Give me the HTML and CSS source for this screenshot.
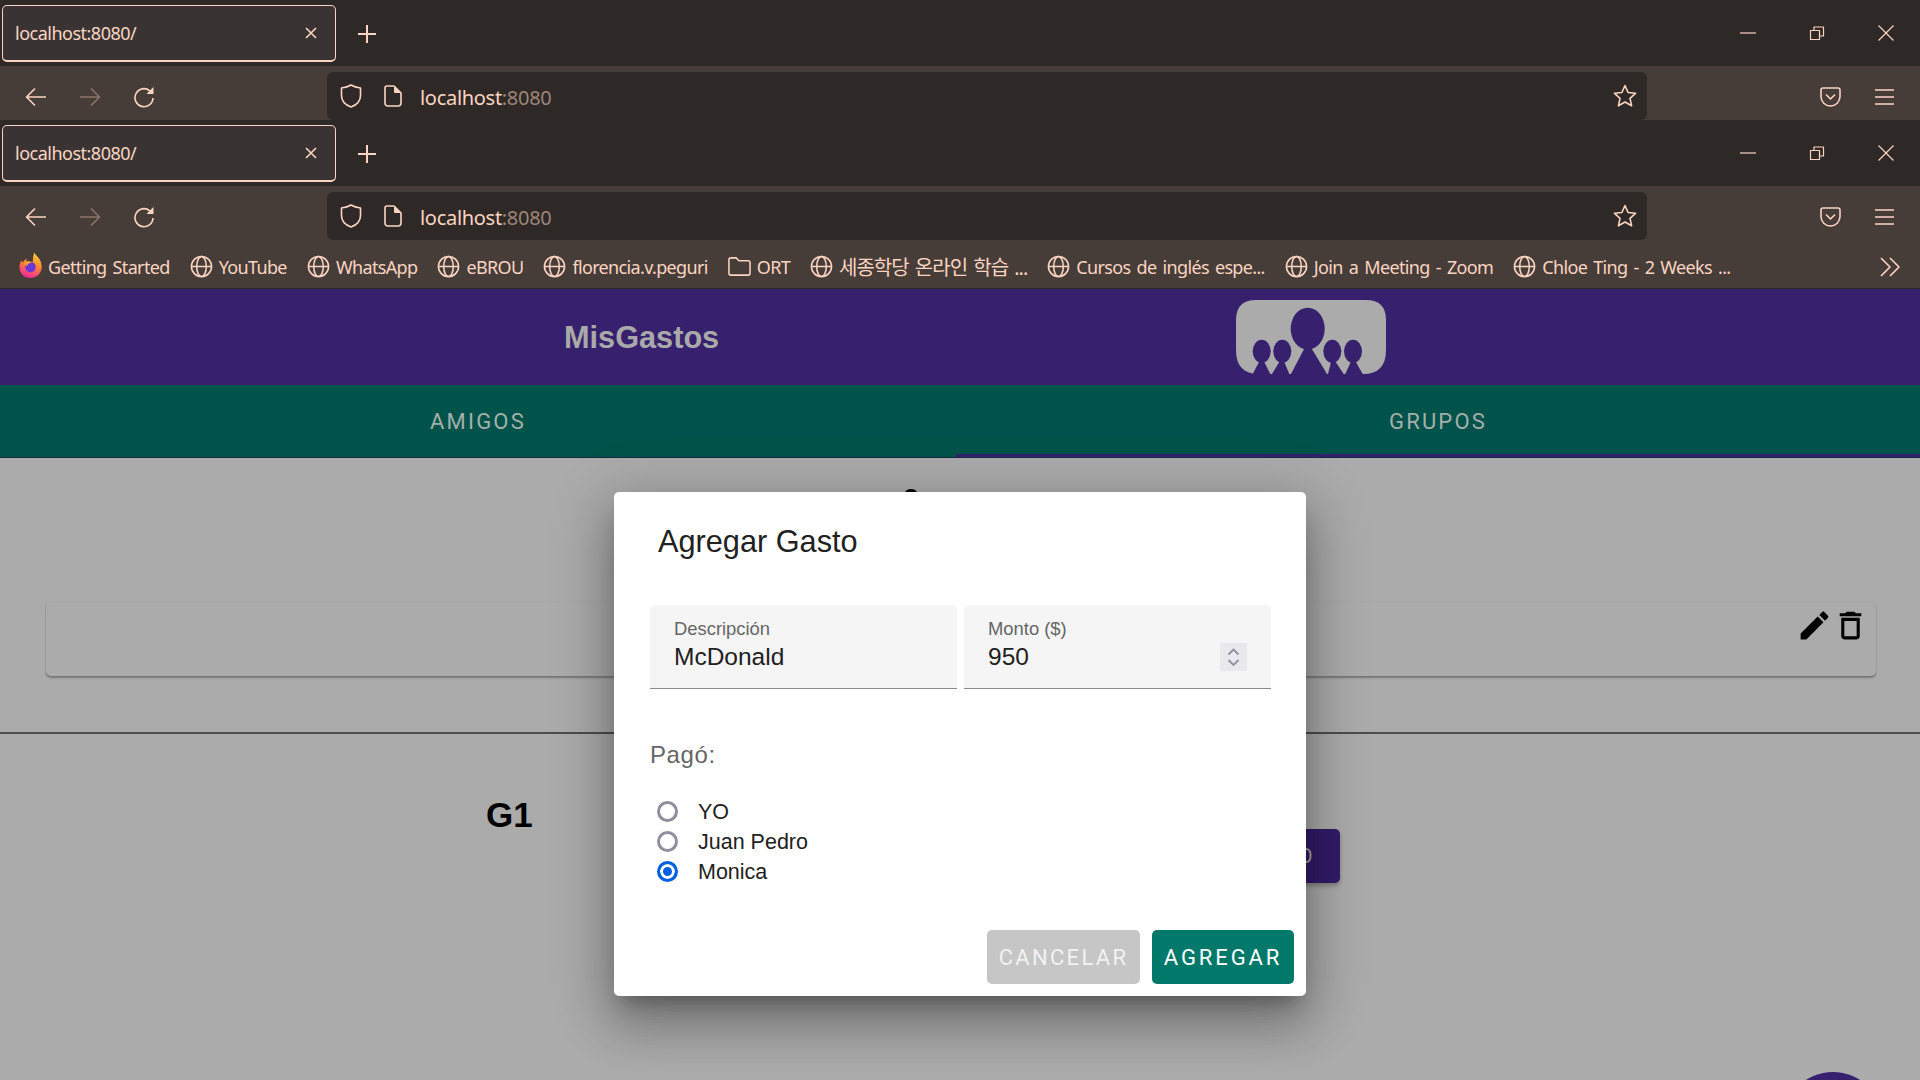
FILE: index.html
```html
<!DOCTYPE html>
<html lang="es">
<head>
    <meta charset="UTF-8">
    <title>MisGastos</title>
    <link rel="stylesheet" href="styles.css">
</head>
<body>

    <!-- shared icons -->
    <svg class="sprite" xmlns="http://www.w3.org/2000/svg">
        <symbol id="i-back" viewBox="0 0 22 22"><path d="M21 11H2M10 2.500L1.500 11l8.500 8.500"/></symbol>
        <symbol id="i-forward" viewBox="0 0 22 22"><path d="M1 11h19M12 2.500l8.500 8.500-8.500 8.500"/></symbol>
        <symbol id="i-reload" viewBox="0 0 22 22"><path d="M20 12a9 9 0 1 1-3.200-7.200"/><path class="solid" d="M20.500 1v7h-7z"/></symbol>
        <symbol id="i-shield" viewBox="0 0 22 24"><path d="M11 1C8.500 2.600 5 3.600 1.500 4v7.500C1.500 17 5.500 21 11 23c5.500-2 9.500-6 9.500-11.500V4C17 3.600 13.500 2.600 11 1z"/></symbol>
        <symbol id="i-page" viewBox="0 0 18 22"><path d="M3 1h7l7 7v10a3 3 0 0 1-3 3H4a3 3 0 0 1-3-3V3a2 2 0 0 1 2-2z"/><path class="solid" d="M10 1l7 7h-6a1 1 0 0 1-1-1z"/></symbol>
        <symbol id="i-star" viewBox="0 0 24 24"><path d="M12 1.500l3.100 7 7.400.8-5.500 5 1.600 7.500L12 18l-6.600 3.800L7 14.300l-5.500-5 7.400-.8z"/></symbol>
        <symbol id="i-pocket" viewBox="0 0 21 20"><path d="M3 1h15a2 2 0 0 1 2 2v6.500a9.500 9.500 0 0 1-19 0V3a2 2 0 0 1 2-2z"/><path d="M6 7.500l4.500 4.500L15 7.500"/></symbol>
        <symbol id="i-menu" viewBox="0 0 19 16"><path d="M0 1h19M0 8h19M0 15h19"/></symbol>
        <symbol id="i-globe" viewBox="0 0 24 24"><circle cx="12" cy="12" r="10.500"/><ellipse cx="12" cy="12" rx="5" ry="10.500"/><path d="M1.500 12h21"/></symbol>
        <symbol id="i-folder" viewBox="0 0 24 22"><path d="M1 4a2 2 0 0 1 2-2h5.500l3 3H21a2 2 0 0 1 2 2v11a2 2 0 0 1-2 2H3a2 2 0 0 1-2-2z"/></symbol>
        <symbol id="i-tabclose" viewBox="0 0 12 12"><path d="M1 1l10 10M11 1L1 11"/></symbol>
        <symbol id="i-plus" viewBox="0 0 18 18"><path d="M9 0v18M0 9h18"/></symbol>
        <symbol id="i-min" viewBox="0 0 16 16"><path d="M0 8h16"/></symbol>
        <symbol id="i-restore" viewBox="0 0 16 16"><path d="M1.500 5.500h9v9h-9zM5 5.500V2h9.500v9H10.500"/></symbol>
        <symbol id="i-close" viewBox="0 0 16 16"><path d="M.5.500l15 15M15.500.500l-15 15"/></symbol>
    </svg>

    <!-- first browser window, only its top bars are visible -->
    <div class="tabbar">
        <div class="tab">
            <span class="tab-title">localhost:8080/</span>
            <svg class="icon tab-x"><use href="#i-tabclose"/></svg>
        </div>
        <svg class="icon new-tab"><use href="#i-plus"/></svg>
        <div class="winctl">
            <svg class="icon"><use href="#i-min"/></svg>
            <svg class="icon restore"><use href="#i-restore"/></svg>
            <svg class="icon"><use href="#i-close"/></svg>
        </div>
    </div>
    <div class="toolbar">
        <div class="nav">
            <svg class="icon"><use href="#i-back"/></svg>
            <svg class="icon dim"><use href="#i-forward"/></svg>
            <svg class="icon"><use href="#i-reload"/></svg>
        </div>
        <div class="urlbar">
            <svg class="icon shield"><use href="#i-shield"/></svg>
            <svg class="icon page"><use href="#i-page"/></svg>
            <span class="url">localhost<span class="url-port">:8080</span></span>
            <svg class="icon star"><use href="#i-star"/></svg>
        </div>
        <svg class="icon pocket"><use href="#i-pocket"/></svg>
        <svg class="icon menu"><use href="#i-menu"/></svg>
    </div>

    <!-- second browser window -->
    <div class="tabbar">
        <div class="tab">
            <span class="tab-title">localhost:8080/</span>
            <svg class="icon tab-x"><use href="#i-tabclose"/></svg>
        </div>
        <svg class="icon new-tab"><use href="#i-plus"/></svg>
        <div class="winctl">
            <svg class="icon"><use href="#i-min"/></svg>
            <svg class="icon restore"><use href="#i-restore"/></svg>
            <svg class="icon"><use href="#i-close"/></svg>
        </div>
    </div>
    <div class="toolbar">
        <div class="nav">
            <svg class="icon"><use href="#i-back"/></svg>
            <svg class="icon dim"><use href="#i-forward"/></svg>
            <svg class="icon"><use href="#i-reload"/></svg>
        </div>
        <div class="urlbar">
            <svg class="icon shield"><use href="#i-shield"/></svg>
            <svg class="icon page"><use href="#i-page"/></svg>
            <span class="url">localhost<span class="url-port">:8080</span></span>
            <svg class="icon star"><use href="#i-star"/></svg>
        </div>
        <svg class="icon pocket"><use href="#i-pocket"/></svg>
        <svg class="icon menu"><use href="#i-menu"/></svg>
    </div>

    <div class="bookmarks">
        <a class="bm">
            <svg class="bm-fox" viewBox="0 0 24 28">
                <defs>
                    <linearGradient id="foxGrad" x1="0.7" y1="0" x2="0.4" y2="1">
                        <stop offset="0" stop-color="#ffd23c"/>
                        <stop offset="0.45" stop-color="#ff8a2b"/>
                        <stop offset="1" stop-color="#f0269b"/>
                    </linearGradient>
                </defs>
                <path fill="url(#foxGrad)" d="M16 1c1 3 5 5 6.500 9 1 3 1.500 5.500 1 8-1 6-6 9.500-11.500 9.500C5 27.500.5 22.500.5 16c0-3 1-5.500 2.500-7 0 1 .5 2 1 2.500C5 9 7.500 7 9 7.500c-1.500 1-2 2-1.500 2.500 2.500-.5 5 0 6.500 1.500C15 8 14.500 4 16 1z"/>
                <circle cx="12" cy="16" r="5.500" fill="#6a37d4"/>
                <path fill="#ff9a2e" d="M5 12c3-2.500 7-2 9 0-3-.5-5 .5-5.500 3-1.500-.5-3-1.500-3.500-3z"/>
            </svg>
            Getting Started
        </a>
        <a class="bm"><svg class="icon bm-icon"><use href="#i-globe"/></svg>YouTube</a>
        <a class="bm"><svg class="icon bm-icon"><use href="#i-globe"/></svg>WhatsApp</a>
        <a class="bm"><svg class="icon bm-icon"><use href="#i-globe"/></svg>eBROU</a>
        <a class="bm"><svg class="icon bm-icon"><use href="#i-globe"/></svg>florencia.v.peguri</a>
        <a class="bm"><svg class="icon bm-icon"><use href="#i-folder"/></svg>ORT</a>
        <a class="bm bm-ko"><svg class="icon bm-icon"><use href="#i-globe"/></svg>세종학당 온라인 학습 ...</a>
        <a class="bm"><svg class="icon bm-icon"><use href="#i-globe"/></svg>Cursos de inglés espe...</a>
        <a class="bm"><svg class="icon bm-icon"><use href="#i-globe"/></svg>Join a Meeting - Zoom</a>
        <a class="bm"><svg class="icon bm-icon"><use href="#i-globe"/></svg>Chloe Ting - 2 Weeks ...</a>
        <svg class="icon bm-more" viewBox="0 0 20 20"><path d="M1 1l9 9-9 9M10 1l9 9-9 9"/></svg>
    </div>

    <!-- the app -->
    <header class="app-header">
        <h1 class="app-title">MisGastos</h1>
        <svg class="app-logo" viewBox="0 0 150 74">
            <path class="logo-bg" d="M20 0H130Q150 0 150 20V50Q150 74 127 74H23Q0 74 0 50V20Q0 0 20 0Z"/>
            <g class="logo-people">
                <ellipse cx="71.700" cy="28.700" rx="17" ry="21"/>
                <path d="M71.700 42L91 74H55z"/>
                <ellipse cx="25.700" cy="51.300" rx="9" ry="11.500"/>
                <path d="M25.700 57L34.300 74H16.700z"/>
                <ellipse cx="46.300" cy="51.300" rx="9" ry="11.500"/>
                <path d="M46.300 57L53.300 74H36z"/>
                <ellipse cx="96.300" cy="51.300" rx="9" ry="11.500"/>
                <path d="M96.300 57L107.700 74H92z"/>
                <ellipse cx="117" cy="51.300" rx="9" ry="11.500"/>
                <path d="M117 57L126.700 74H109.300z"/>
            </g>
        </svg>
    </header>

    <nav class="app-tabs">
        <div class="app-tab">AMIGOS</div>
        <div class="app-tab app-tab-active">GRUPOS</div>
    </nav>

    <main class="content">
        <div class="peek"></div>
        <div class="card">
            <svg class="card-icon card-edit" viewBox="0 0 24 24"><path d="M3 17.250V21h3.750L17.810 9.940l-3.750-3.750L3 17.250zM20.710 7.040c.39-.39.39-1.020 0-1.410l-2.340-2.340c-.39-.39-1.020-.39-1.410 0l-1.830 1.830 3.750 3.750 1.830-1.830z"/></svg>
            <svg class="card-icon" viewBox="0 0 24 24"><path d="M6 19c0 1.100.9 2 2 2h8c1.100 0 2-.9 2-2V7H6v12zM8 9h8v10H8V9zm7.500-5l-1-1h-5l-1 1H5v2h14V4h-3.500z"/></svg>
        </div>
        <hr class="divider">
        <div class="group-row">
            <h2 class="group-name">G1</h2>
            <button class="group-btn">AGREGAR GASTO</button>
        </div>
    </main>

    <div class="fab"></div>

    <!-- modal -->
    <div class="modal">
        <h2 class="modal-title">Agregar Gasto</h2>
        <div class="fields">
            <div class="field">
                <div class="field-label">Descripción</div>
                <div class="field-value">McDonald</div>
            </div>
            <div class="field">
                <div class="field-label">Monto ($)</div>
                <div class="field-value">
                    950
                    <svg class="spinner" viewBox="0 0 27 28"><path d="M8.500 11.500l5-5 5 5M8.500 17l5 5 5-5"/></svg>
                </div>
            </div>
        </div>
        <div class="paid-label">Pagó:</div>
        <div class="radios">
            <div class="radio-row"><span class="radio"></span>YO</div>
            <div class="radio-row"><span class="radio"></span>Juan Pedro</div>
            <div class="radio-row"><span class="radio radio-on"></span>Monica</div>
        </div>
        <div class="modal-actions">
            <button class="btn btn-cancel">CANCELAR</button>
            <button class="btn btn-add">AGREGAR</button>
        </div>
    </div>

</body>
</html>
```

FILE: styles.css
```css
* {
    box-sizing: border-box;
}

html, body {
    margin: 0;
    padding: 0;
    height: 1080px;
    overflow: hidden;
}

body {
    width: 1920px;
    position: relative;
    background-color: #ababab;
    font-family: "Liberation Sans", Arial, sans-serif;
}

.sprite {
    position: absolute;
    width: 0;
    height: 0;
}

.icon {
    display: block;
    flex: none;
    width: 22px;
    height: 22px;
    fill: none;
    stroke: #fbd4c2;
    stroke-width: 1.6;
    stroke-linejoin: round;
}

.solid {
    fill: #fbd4c2;
    stroke: none;
}

/* browser chrome */
.tabbar {
    display: flex;
    align-items: flex-start;
    height: 66px;
    padding: 5px 0 0 2px;
    background-color: #2e2926;
}

.tab {
    display: flex;
    align-items: center;
    justify-content: space-between;
    width: 334px;
    height: 57px;
    padding: 0 18px 0 12px;
    background-color: #393433;
    border: 1px solid #fbd4c2;
    border-bottom-width: 2px;
    border-radius: 5px;
}

.tab-title, .url, .bm {
    font-family: "Noto Sans", sans-serif;
    font-size: 18px;
    letter-spacing: -0.5px;
    color: #fbd4c2;
}

.tab-x {
    width: 12px;
    height: 12px;
}

.new-tab {
    width: 18px;
    height: 18px;
    margin: 20px 0 0 22px;
    stroke-width: 2;
}

.winctl {
    display: flex;
    align-items: center;
    gap: 53px;
    margin: 20px 26px 0 auto;
}

.winctl .icon {
    width: 16px;
    height: 16px;
    stroke-width: 1.2;
}

.toolbar {
    display: flex;
    align-items: center;
    height: 54px;
    padding-top: 8px;
    background-color: #473d38;
}

.nav {
    display: flex;
    gap: 32px;
    width: 327px;
    padding-left: 25px;
}

.dim {
    stroke: #8a7669;
}

.urlbar {
    display: flex;
    align-items: center;
    align-self: flex-end;
    width: 1320px;
    height: 48px;
    padding: 0 10px 0 13px;
    background-color: #2e2926;
    border-radius: 6px;
}

.shield {
    height: 24px;
}

.page {
    width: 18px;
    margin-left: 22px;
}

.url {
    margin: 2px 0 0 18px;
    font-size: 20px;
    letter-spacing: -0.3px;
}

.url-port {
    color: #9c8578;
}

.star {
    width: 24px;
    height: 24px;
    margin-left: auto;
}

.pocket {
    width: 21px;
    height: 20px;
    margin-left: 173px;
}

.menu {
    width: 19px;
    height: 16px;
    margin-left: 34px;
}

.bookmarks {
    display: flex;
    align-items: center;
    gap: 20px;
    height: 49px;
    padding: 5px 0 0 19px;
    background-color: #473d38;
    border-bottom: 1px solid #2e2926;
}

.bm {
    display: flex;
    align-items: center;
    gap: 6px;
    font-family: "Noto Sans", "Noto Sans CJK KR", sans-serif;
    letter-spacing: -0.65px;
    word-spacing: 2px;
    white-space: nowrap;
}

.bm-ko {
    font-size: 20px;
    letter-spacing: -1px;
}

.bm-fox {
    width: 23px;
    height: 28px;
    margin-top: -4px;
}

.bm-icon {
    width: 23px;
    height: 23px;
}

.bm-more {
    width: 20px;
    height: 20px;
    margin-left: auto;
    margin-right: 20px;
}

/* app */
.app-header {
    display: flex;
    align-items: center;
    height: 96px;
    padding-left: 564px;
    background-color: #37216f;
}

.app-title {
    width: 154px;
    margin: 2px 518px 0 0;
    font-size: 30.700px;
    font-weight: bold;
    color: #a9a9a9;
    white-space: nowrap;
}

.app-logo {
    width: 150px;
    height: 74px;
}

.logo-bg {
    fill: #ababab;
}

.logo-people {
    fill: #37216f;
}

.app-tabs {
    display: grid;
    grid-template-columns: 956px 964px;
    height: 73px;
    background-color: #00534a;
    border-bottom: 1px solid #12293f;
}

.app-tab {
    display: flex;
    align-items: center;
    justify-content: center;
    font-family: Roboto, sans-serif;
    font-size: 22px;
    letter-spacing: 2.200px;
    color: #a4afac;
}

.app-tab-active {
    box-shadow: inset 0 -3px 0 #37216f;
}

.content {
    padding-top: 31px;
}

.peek {
    width: 12px;
    height: 8px;
    margin-left: 905px;
    background-color: #000;
    border-radius: 50%;
}

.card {
    display: flex;
    justify-content: flex-end;
    height: 74px;
    margin: 105px 44px 0 46px;
    padding: 5px 7px 0 0;
    background-color: #ababab;
    border-radius: 5px;
    box-shadow: 0 2px 2px rgba(0, 0, 0, 0.3), 0 0 1px rgba(0, 0, 0, 0.08);
}

.card-icon {
    width: 37px;
    height: 37px;
    fill: #000;
}

.card-edit {
    margin-right: -1px;
}

.divider {
    height: 2px;
    margin: 56px 0 0;
    background-color: #4d4d4d;
    border: none;
}

.group-row {
    display: flex;
    align-items: flex-start;
    padding: 61px 580px 0 486px;
}

.group-name {
    margin: 0;
    font-size: 35px;
    line-height: 40px;
    color: #000;
}

.group-btn {
    width: 220px;
    height: 54px;
    margin: 34px 0 0 auto;
    padding: 0 26px 0 0;
    text-align: right;
    font-family: Roboto, sans-serif;
    font-size: 20px;
    letter-spacing: 1.500px;
    color: #a9a9a9;
    background-color: #321c69;
    border: none;
    border-radius: 5px;
    box-shadow: 0 3px 4px rgba(0, 0, 0, 0.25);
}

.fab {
    position: absolute;
    left: 1783px;
    top: 1072px;
    width: 100px;
    height: 100px;
    background-color: #37216f;
    border-radius: 50%;
}

/* modal over the page */
.modal {
    position: absolute;
    left: 614px;
    top: 492px;
    width: 692px;
    height: 504px;
    padding: 32px 12px 12px 36px;
    background-color: #fff;
    border-radius: 5px;
    box-shadow: 0 14px 19px -9px rgba(0, 0, 0, 0.3), 0 30px 48px 4px rgba(0, 0, 0, 0.2), 0 11px 58px 10px rgba(0, 0, 0, 0.16);
}

.modal-title {
    margin: 0 0 0 8px;
    font-size: 30.700px;
    font-weight: normal;
    line-height: 36px;
    color: #212121;
}

.fields {
    display: flex;
    gap: 7px;
    margin-top: 45px;
}

.field {
    width: 307px;
    height: 84px;
    padding: 14px 24px 0;
    background-color: #f5f5f5;
    border-bottom: 1px solid #8c8c8c;
    border-radius: 5px 5px 0 0;
}

.field-label {
    font-size: 18.400px;
    line-height: 20px;
    color: #666;
}

.field-value {
    display: flex;
    align-items: center;
    justify-content: space-between;
    height: 30px;
    margin-top: 3px;
    font-size: 24.500px;
    color: #212121;
}

.spinner {
    width: 27px;
    height: 28px;
    background-color: #e9e9ed;
    fill: none;
    stroke: #8f8f9d;
    stroke-width: 1.8;
}

.paid-label {
    margin-top: 53px;
    font-size: 24px;
    line-height: 26px;
    letter-spacing: 0.6px;
    color: #666;
}

.radios {
    margin-top: 28px;
}

.radio-row {
    display: flex;
    align-items: center;
    height: 30px;
    padding-top: 2px;
    font-size: 21.500px;
    color: #212121;
}

.radio {
    width: 21px;
    height: 21px;
    margin: -2px 20px 0 7px;
    border: 3px solid #8f8f9d;
    border-radius: 50%;
}

.radio-on {
    border-color: #0060df;
    background-color: #0060df;
    box-shadow: inset 0 0 0 3px #fff;
}

.modal-actions {
    display: flex;
    justify-content: flex-end;
    gap: 12px;
    margin-top: 44px;
}

.btn {
    height: 54px;
    padding: 0;
    font-family: Roboto, sans-serif;
    font-size: 22px;
    color: #fff;
    border: none;
    border-radius: 5px;
}

.btn-cancel {
    width: 153px;
    letter-spacing: 2.300px;
    color: #f2f2f2;
    background-color: #c6c6c6;
}

.btn-add {
    width: 142px;
    letter-spacing: 2.900px;
    background-color: #00796b;
}
```
